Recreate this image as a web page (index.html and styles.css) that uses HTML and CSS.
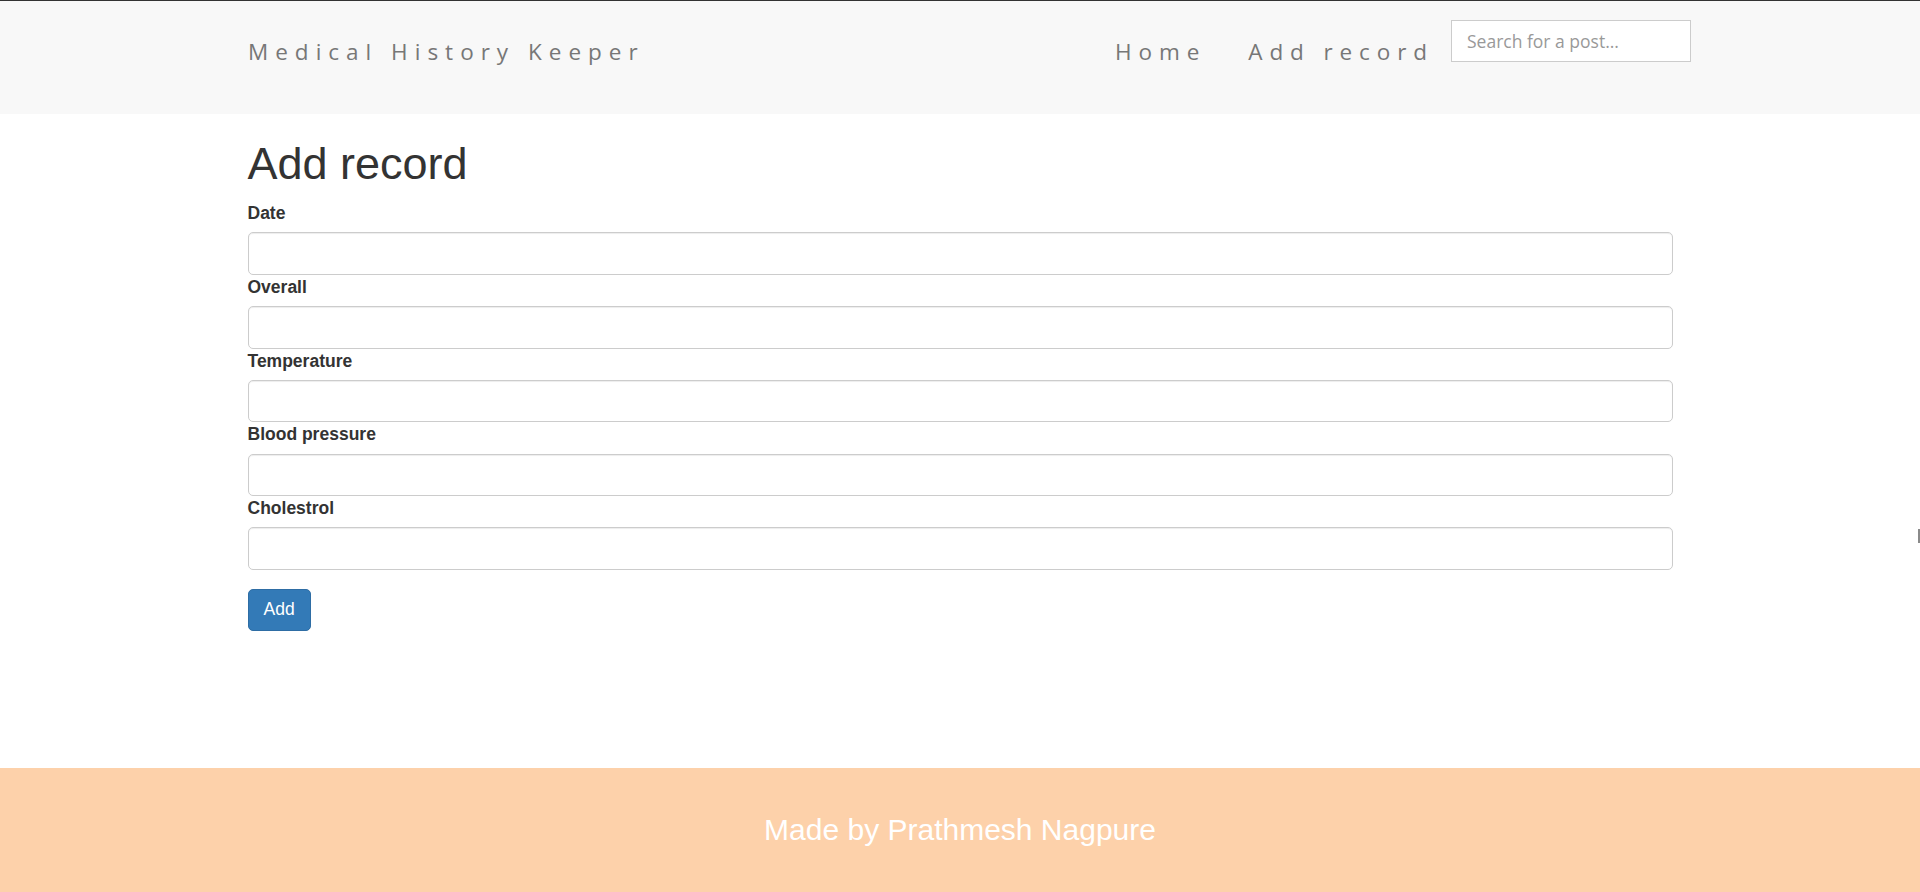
FILE: index.html
```html
<!DOCTYPE html>
<html lang="en">
<head>
<meta charset="utf-8">
<title>Medical History Keeper</title>
<link rel="stylesheet" href="styles.css">
</head>
<body>
<div class="page">
  <header class="navbar">
    <div class="nav-inner">
      <a class="brand" href="#">Medical History Keeper</a>
      <div class="nav-right">
        <a class="nav-link" href="#">Home</a>
        <a class="nav-link" href="#">Add record</a>
        <input class="search" type="text" placeholder="Search for a post...">
      </div>
    </div>
  </header>
  <main class="content">
    <h1 class="title">Add record</h1>
    <form class="record-form">
      <label class="field-label">Date</label>
      <input class="field-input" type="text">
      <label class="field-label">Overall</label>
      <input class="field-input" type="text">
      <label class="field-label">Temperature</label>
      <input class="field-input" type="text">
      <label class="field-label">Blood pressure</label>
      <input class="field-input" type="text">
      <label class="field-label">Cholestrol</label>
      <input class="field-input" type="text">
      <button class="btn-add" type="button">Add</button>
    </form>
  </main>
  <footer class="footer">Made by Prathmesh Nagpure</footer>
  <div class="edge-mark"></div>
</div>
</body>
</html>
```

FILE: styles.css
```css
* { box-sizing: border-box; }
html, body { margin: 0; padding: 0; }
body {
  font-family: "Liberation Sans", Arial, sans-serif;
  color: #333;
  background: #fff;
}
.page {
  min-height: 892px;
  display: flex;
  flex-direction: column;
  position: relative;
}
.navbar {
  border-top: 1px solid #333;
  background: #f8f8f8;
  height: 114px;
}
.nav-inner {
  display: flex;
  justify-content: space-between;
  align-items: flex-start;
  padding: 0 229px 0 248px;
}
.brand, .nav-link {
  font-family: "Open Sans", "DejaVu Sans", sans-serif;
  font-weight: 400;
  font-size: 22.5px;
  color: #777;
  text-decoration: none;
  letter-spacing: 6.9px;
  line-height: 30px;
  margin-top: 36px;
}
.brand { letter-spacing: 7px; }
.nav-right {
  display: flex;
  align-items: flex-start;
}
.nav-link { margin-right: 42px; }
.nav-link + .nav-link { margin-right: 17px; }
.search {
  width: 240px;
  height: 42px;
  margin-top: 19px;
  border: 1px solid #ccc;
  background: #fff;
  padding: 0 15px;
  font-family: "Open Sans", sans-serif;
  font-size: 17.5px;
  color: #555;
  outline: none;
}
.search::placeholder { color: #999; }
.content {
  flex: 1;
  width: 1425px;
  margin: 0 auto;
}
.title {
  font-size: 45px;
  font-weight: 400;
  line-height: 49.5px;
  margin: 25px 0 12.5px;
  color: #333;
}
.record-form {
  display: flex;
  flex-direction: column;
  align-items: flex-start;
}
.field-label {
  font-weight: 700;
  font-size: 17.5px;
  line-height: 25px;
  margin: 0 0 6.25px;
  color: #333;
}
.field-input {
  width: 100%;
  height: 42.5px;
  border: 1px solid #ccc;
  border-radius: 5px;
  box-shadow: inset 0 1px 1px rgba(0,0,0,.075);
  padding: 7px 15px;
  font-size: 17.5px;
  font-family: inherit;
}
.btn-add {
  margin-top: 18.75px;
  height: 42.5px;
  padding: 0 15px;
  background: #337ab7;
  border: 1px solid #2e6da4;
  border-radius: 5px;
  color: #fff;
  font-family: "Liberation Sans", Arial, sans-serif;
  font-size: 17.5px;
}
.footer {
  height: 124px;
  background: #fdd1aa;
  color: #fff;
  font-size: 30px;
  display: flex;
  align-items: center;
  justify-content: center;
}
.edge-mark {
  position: absolute;
  right: 0;
  top: 529px;
  width: 2px;
  height: 14px;
  background: #8a8a8a;
}
```
